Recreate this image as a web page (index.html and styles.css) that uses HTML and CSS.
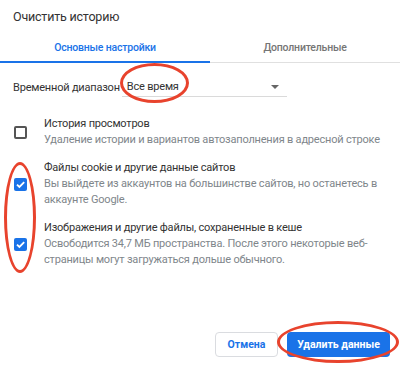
FILE: index.html
```html
<!DOCTYPE html>
<html lang="ru">

<head>
  <meta charset="UTF-8">
  <meta name="viewport" content="width=device-width, initial-scale=1.0">
  <title>Очистить историю</title>
  <link rel="stylesheet" href="styles.css">
</head>

<body>
  <div id="dialog">
    <div class="title">Очистить историю</div>

    <div class="tabs">
      <div class="tab active">Основные настройки</div>
      <div class="tab">Дополнительные</div>
    </div>

    <div class="range">
      <span class="range-label">Временной диапазон</span>
      <div class="select">
        <span>Все время</span>
        <span class="arrow"></span>
      </div>
    </div>

    <ul class="items">
      <li>
        <span class="box"></span>
        <div class="text">
          <div class="name">История просмотров</div>
          <div class="desc">Удаление истории и вариантов автозаполнения в адресной строке</div>
        </div>
      </li>
      <li>
        <span class="box checked">
          <svg width="13" height="13" viewBox="0 0 13 13"><path d="M3 6.6l2.4 2.4 4.8-4.9" fill="none" stroke="#fff" stroke-width="1.8"/></svg>
        </span>
        <div class="text">
          <div class="name">Файлы cookie и другие данные сайтов</div>
          <div class="desc">Вы выйдете из аккаунтов на большинстве сайтов, но останетесь в аккаунте Google.</div>
        </div>
      </li>
      <li>
        <span class="box checked">
          <svg width="13" height="13" viewBox="0 0 13 13"><path d="M3 6.6l2.4 2.4 4.8-4.9" fill="none" stroke="#fff" stroke-width="1.8"/></svg>
        </span>
        <div class="text">
          <div class="name">Изображения и другие файлы, сохраненные в кеше</div>
          <div class="desc">Освободится 34,7 МБ пространства. После этого некоторые веб-страницы могут загружаться дольше обычного.</div>
        </div>
      </li>
    </ul>

    <div class="buttons">
      <button class="btn cancel">Отмена</button>
      <button class="btn primary">Удалить данные</button>
    </div>

    <!-- красные пометки -->
    <div class="mark mark-range"></div>
    <div class="mark mark-boxes"></div>
    <div class="mark mark-btn"></div>
  </div>
</body>

</html>
```

FILE: styles.css
```css
* {
  box-sizing: border-box;
}

body {
  margin: 0;
  background: #fff;
  font-family: Roboto, "Liberation Sans", sans-serif;
  font-size: 11px;
  letter-spacing: -0.2px;
  color: #333;
}

#dialog {
  position: relative;
  height: 365px;
  display: flex;
  flex-direction: column;
  overflow: hidden;
}

.title {
  height: 34px;
  padding-left: 13px;
  font-size: 12.5px;
  line-height: 34px;
  color: #333;
}

/* вкладки */
.tabs {
  display: flex;
  height: 29px;
  border-bottom: 1px solid #e0e0e0;
}

.tab {
  flex: 1;
  text-align: center;
  line-height: 28px;
  font-size: 10.5px;
  font-weight: 500;
  color: #757575;
}

.tab.active {
  flex: 0 0 210px;
  color: #1a73e8;
  border-bottom: 2px solid #1a73e8;
  margin-bottom: -1px;
  line-height: 27px;
}

/* диапазон */
.range {
  display: flex;
  align-items: center;
  height: 20px;
  margin-top: 14px;
  padding-left: 13px;
}

.range-label {
  color: #333;
}

.select {
  display: flex;
  align-items: center;
  justify-content: space-between;
  width: 165px;
  height: 20px;
  margin-left: 2px;
  padding: 0 8px 0 5px;
  border-bottom: 1px solid #dadada;
  color: #333;
}

.arrow {
  width: 0;
  height: 0;
  border-left: 4px solid transparent;
  border-right: 4px solid transparent;
  border-top: 4px solid #666;
}

/* пункты */
.items {
  list-style: none;
  margin: 19px 0 0;
  padding: 0;
}

.items li {
  display: flex;
  align-items: center;
  margin-bottom: 12px;
  padding-right: 16px;
}

.box {
  flex: 0 0 13px;
  width: 13px;
  height: 13px;
  margin: 0 17px 0 14px;
  border: 2px solid #555;
  border-radius: 2px;
}

.box.checked {
  border: none;
  background: #1a73e8;
}

.box svg {
  display: block;
}

.name,
.desc {
  line-height: 16px;
}

.name {
  color: #333;
}

.desc {
  color: #80868b;
}

/* кнопки */
.buttons {
  display: flex;
  justify-content: flex-end;
  gap: 9px;
  margin-top: auto;
  padding: 0 10px 8px 0;
}

.btn {
  height: 25px;
  padding: 0;
  border-radius: 4px;
  font-family: Roboto, "Liberation Sans", sans-serif;
  font-size: 10.5px;
  font-weight: bold;
}

.cancel {
  width: 63px;
  border: 1px solid #dadce0;
  background: #fff;
  color: #1a73e8;
}

.primary {
  width: 103px;
  border: none;
  background: #1a73e8;
  color: #fff;
}

/* красные овалы */
.mark {
  position: absolute;
  border: 3px solid #e8432d;
  border-radius: 50%;
  pointer-events: none;
}

.mark-range {
  left: 120px;
  top: 63px;
  width: 69px;
  height: 40px;
}

.mark-boxes {
  left: 4px;
  top: 162px;
  width: 32px;
  height: 111px;
}

.mark-btn {
  left: 277px;
  top: 321px;
  width: 122px;
  height: 42px;
}
```
